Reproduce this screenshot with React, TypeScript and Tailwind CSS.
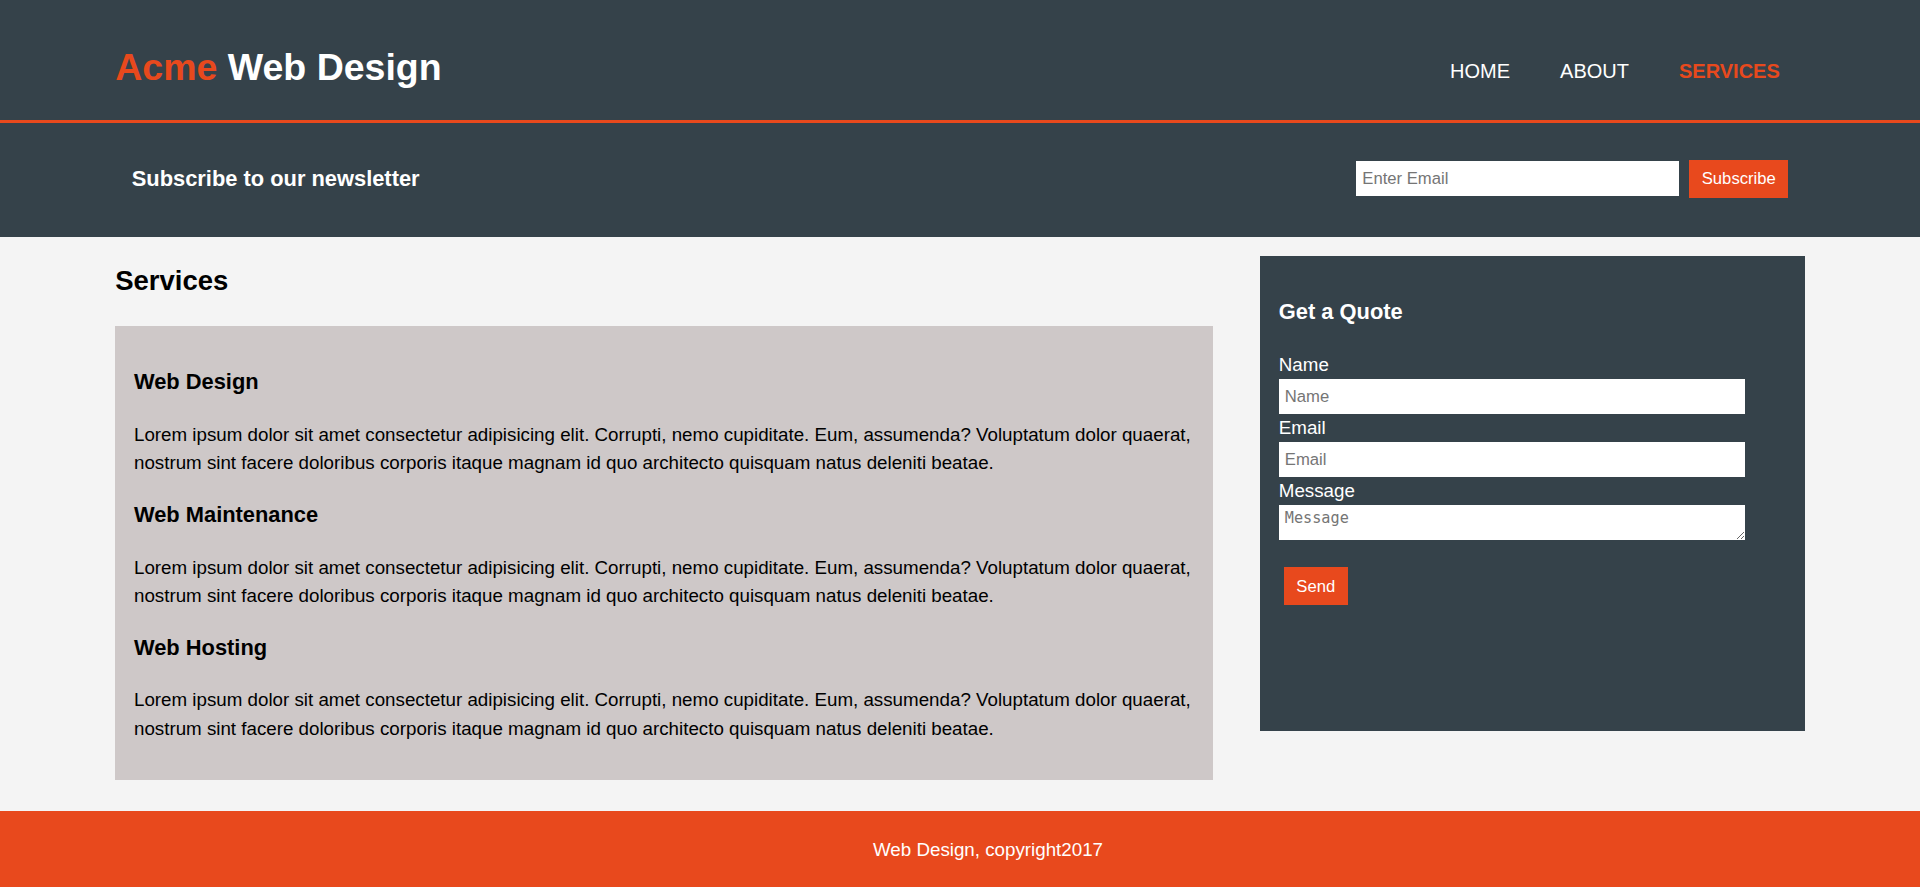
import { useState } from 'react';

const NAV_ITEMS = [
  { label: 'Home', current: false },
  { label: 'About', current: false },
  { label: 'Services', current: true },
];

const SERVICES = ['Web Design', 'Web Maintenance', 'Web Hosting'];

const LOREM =
  'Lorem ipsum dolor sit amet consectetur adipisicing elit. Corrupti, nemo cupiditate. Eum, assumenda? Voluptatum dolor quaerat, nostrum sint facere doloribus corporis itaque magnam id quo architecto quisquam natus deleniti beatae.';

function Header() {
  return (
    <header className="h-[123px] bg-[#35424a] border-b-[3px] border-[#e8491d] text-white">
      <div className="w-[88%] mx-auto flex justify-between items-start pt-[39px]">
        <h1 className="text-[37.5px] font-bold leading-[1.5]">
          <span className="text-[#e8491d]">Acme</span> Web Design
        </h1>
        <nav className="mt-[17px]">
          <ul className="flex">
            {NAV_ITEMS.map((item) => (
              <li key={item.label} className="px-[25px]">
                <a
                  href="#"
                  className={
                    item.current
                      ? 'uppercase text-[20px] leading-[30px] font-bold text-[#e8491d]'
                      : 'uppercase text-[20px] leading-[30px] text-white'
                  }
                >
                  {item.label}
                </a>
              </li>
            ))}
          </ul>
        </nav>
      </div>
    </header>
  );
}

function Newsletter() {
  const [email, setEmail] = useState('');
  return (
    <section className="h-[114px] bg-[#35424a] text-white px-[18.75px] pb-[3px] flex items-center">
      <div className="w-[88%] mx-auto flex justify-between items-center">
        <h3 className="mt-[2px] text-[21.875px] font-bold leading-[1.5]">Subscribe to our newsletter</h3>
        <form className="flex items-center" onSubmit={(e) => e.preventDefault()}>
          <input
            type="email"
            value={email}
            onChange={(e) => setEmail(e.target.value)}
            placeholder="Enter Email"
            className="w-[323px] h-[35px] bg-white px-[6px] text-[16.67px] text-black placeholder:text-[#757575] outline-none"
          />
          <button
            type="submit"
            className="ml-[10px] w-[99px] h-[38px] bg-[#e8491d] text-white text-[16.67px]"
          >
            Subscribe
          </button>
        </form>
      </div>
    </section>
  );
}

function QuoteForm() {
  const fieldClass =
    'block w-[466px] h-[35px] bg-white px-[6px] text-[16.67px] text-black placeholder:text-[#757575] outline-none';
  return (
    <aside className="w-[545px] mt-[19px] h-[475px] bg-[#35424a] text-white px-[19px] pt-[19px]">
      <h3 className="mt-[21.2px] mb-[22px] text-[21.875px] font-bold leading-[1.5]">Get a Quote</h3>
      <form onSubmit={(e) => e.preventDefault()}>
        <div>
          <label className="block leading-[28px]">Name</label>
          <input type="text" placeholder="Name" className={fieldClass} />
        </div>
        <div>
          <label className="block leading-[28px]">Email</label>
          <input type="email" placeholder="Email" className={fieldClass} />
        </div>
        <div>
          <label className="block leading-[28px]">Message</label>
          <textarea
            placeholder="Message"
            className="block w-[466px] h-[35px] bg-white px-[6px] py-[4px] text-[15.2px] leading-[1.2] font-['DejaVu_Sans_Mono',monospace] text-black placeholder:text-[#757575] outline-none"
          />
        </div>
        <button
          type="submit"
          className="ml-[5px] mt-[27px] w-[64px] h-[38px] bg-[#e8491d] text-white text-[16.67px]"
        >
          Send
        </button>
      </form>
    </aside>
  );
}

export default function App() {
  return (
    <div className="min-h-screen bg-[#f4f4f4] text-black font-['Liberation_Sans',Arial,sans-serif] text-[18.75px] leading-[1.5]">
      <Header />
      <Newsletter />

      <section className="w-[88%] mx-auto flex justify-between items-start">
        <article className="w-[65%]">
          <h1 className="mt-[22.8px] text-[27.5px] font-bold leading-[1.5]">Services</h1>
          <div className="mt-[25px] bg-[#cec8c8] p-[18.75px] flow-root">
            {SERVICES.map((name, i) => (
              <div key={name}>
                <h3
                  className={
                    i === 0
                      ? 'mt-[21.2px] mb-[21.9px] text-[21.875px] font-bold leading-[1.5]'
                      : 'mt-[21.9px] mb-[21.9px] text-[21.875px] font-bold leading-[1.5]'
                  }
                >
                  {name}
                </h3>
                <p className="my-[18.75px]">{LOREM}</p>
              </div>
            ))}
          </div>
        </article>
        <QuoteForm />
      </section>

      <footer className="mt-[31px] bg-[#e8491d] text-white text-center pt-[25px] pb-[25px] pl-[56px]">
        <p>Web Design, copyright2017</p>
      </footer>
    </div>
  );
}
